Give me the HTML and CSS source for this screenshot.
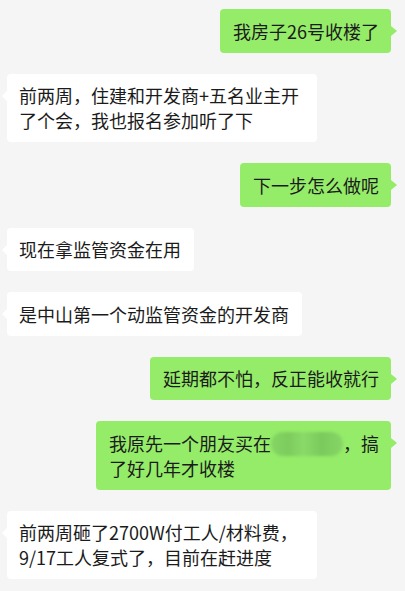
FILE: index.html
```html
<!DOCTYPE html>
<html>
<head>
    <meta charset="utf-8">
    <title>聊天记录</title>
    <link rel="stylesheet" href="styles.css">
</head>
<body>
    <div class="chat">
        <div class="row mine"><div class="bubble">我房子26号收楼了</div></div>
        <div class="row theirs"><div class="bubble">前两周，住建和开发商+五名业主开了个会，我也报名参加听了下</div></div>
        <div class="row mine"><div class="bubble">下一步怎么做呢</div></div>
        <div class="row theirs"><div class="bubble">现在拿监管资金在用</div></div>
        <div class="row theirs"><div class="bubble">是中山第一个动监管资金的开发商</div></div>
        <div class="row mine"><div class="bubble">延期都不怕，反正能收就行</div></div>
        <div class="row mine"><div class="bubble"><span>我原先一个朋友买在</span><span class="masked"></span><span>，搞</span><br><span>了好几年才收楼</span></div></div>
        <div class="row theirs"><div class="bubble">前两周砸了2700W付工人/材料费，9/17工人复式了，目前在赶进度</div></div>
    </div>
</body>
</html>
```

FILE: styles.css
```css
body {
    margin: 0;
    background: #f5f5f5;
    font-family: "Noto Sans CJK SC", "Microsoft YaHei", sans-serif;
    color: #1b1b1b;
}
.chat {
    display: flex;
    flex-direction: column;
    gap: 21px;
    padding: 9px 14px 0 7px;
}
.row {
    display: flex;
}
.mine { justify-content: flex-end; }
.theirs { justify-content: flex-start; }

.bubble {
    position: relative;
    font-size: 18px;
    line-height: 25px;
    padding: 9.5px 13px 9px 12px;
    border-radius: 4px;
    max-width: 310px;
    box-sizing: border-box;
}
.theirs .bubble { background: #ffffff; }
.mine .bubble {
    background: #95ec69;
    padding: 9.5px 12px 9px 13px;
    max-width: 300px;
}

/* little tails on the side of each bubble */
.bubble::after {
    content: "";
    position: absolute;
    top: 17px;
    border-top: 5px solid transparent;
    border-bottom: 5px solid transparent;
}
.mine .bubble::after {
    right: -6px;
    border-left: 6px solid #95ec69;
}
.theirs .bubble::after {
    left: -5px;
    border-right: 5px solid #ffffff;
}

/* blurred-out place name */
.masked {
    display: inline-block;
    vertical-align: top;
    width: 4em;
    height: 24px;
    margin-top: 1px;
    border-radius: 12px;
    background: linear-gradient(90deg, #84d664 0%, #7ccb5d 25%, #8ada69 45%, #7ac95c 70%, #86d666 100%);
    filter: blur(1.5px);
}
```
